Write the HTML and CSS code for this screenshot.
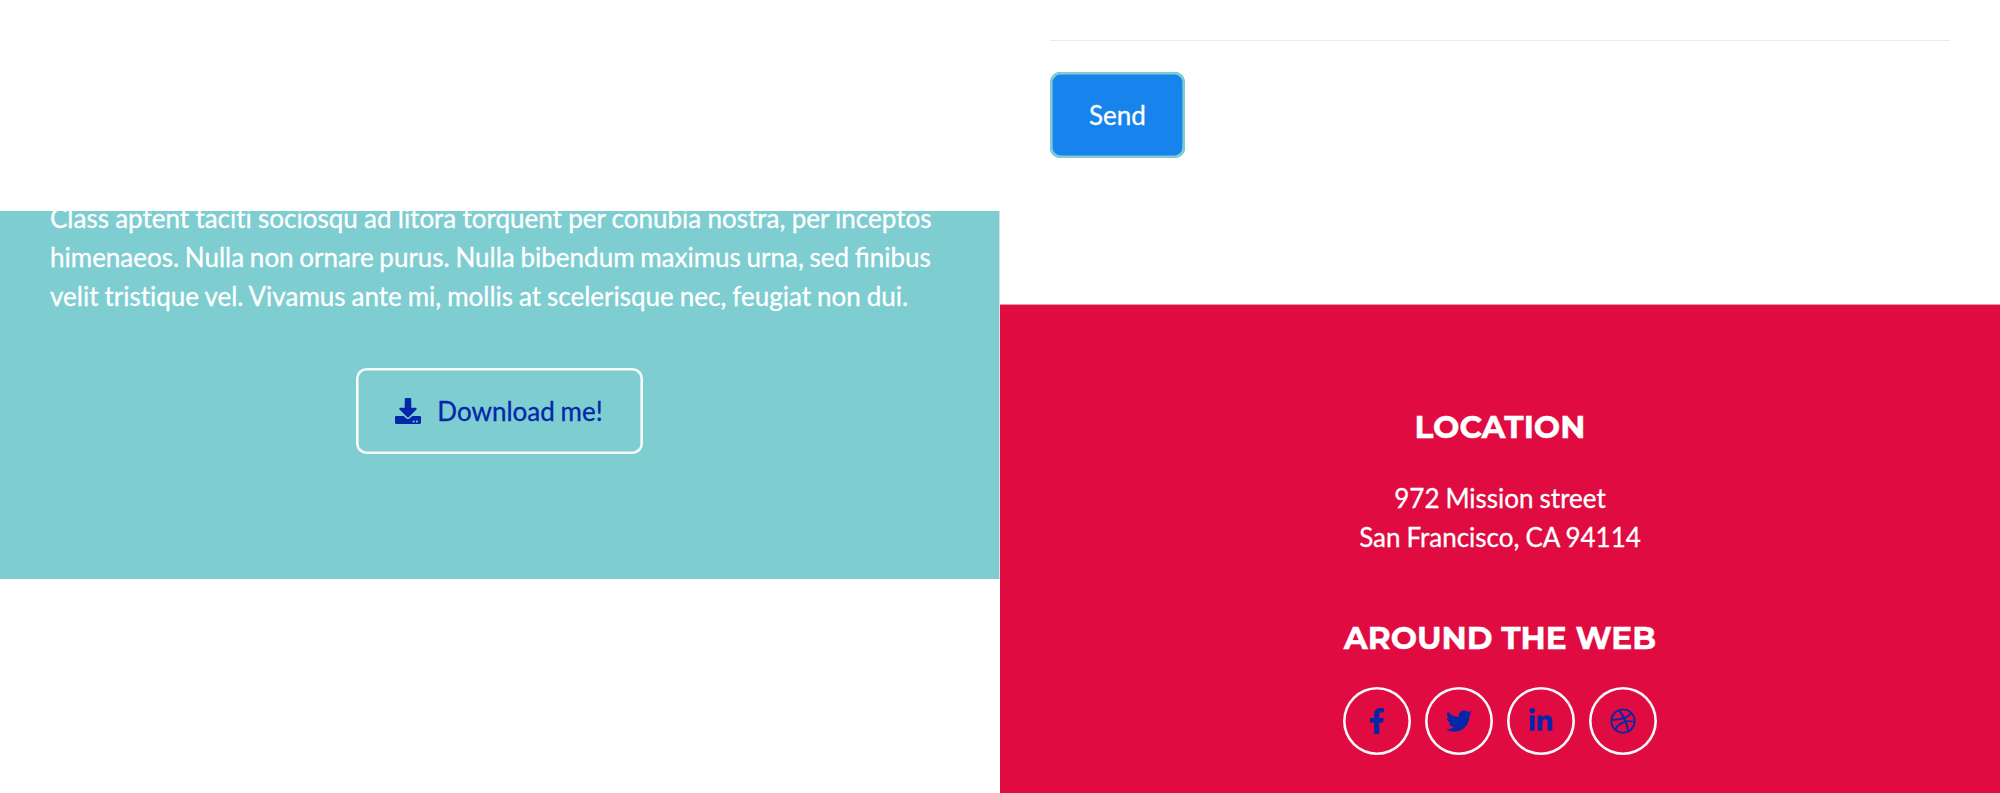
FILE: index.html
```html
<!DOCTYPE html>
<html lang="en">
<head>
<meta charset="utf-8">
<title>Freelancer</title>
<link rel="stylesheet" href="styles.css">
</head>
<body>
<main class="page">
  <div class="column column-left">
    <section class="about">
      <p class="lead"><span class="line-loose">Class aptent <span class="plain">taciti</span> sociosqu ad litora torquent per conubia nostra, per inceptos</span><br><span class="line-tight">himenaeos. Nulla non ornare purus. Nulla bibendum maximus urna, sed finibus</span><br>velit <span class="plain">tristique</span> vel. Vivamus ante mi, mollis at scelerisque nec, feugiat non dui.</p>
      <a class="btn btn-download" href="#">
        <svg class="icon" viewBox="0 0 512 512"><path d="M216 0h80c13.3 0 24 10.7 24 24v168h87.7c17.8 0 26.7 21.5 14.1 34.1L269.7 378.3c-7.5 7.5-19.8 7.5-27.3 0L90.1 226.1c-12.6-12.6-3.7-34.1 14.1-34.1H192V24c0-13.3 10.7-24 24-24zm296 376v112c0 13.3-10.7 24-24 24H24c-13.3 0-24-10.7-24-24V376c0-13.3 10.7-24 24-24h146.7l49 49c20.1 20.1 52.5 20.1 72.6 0l49-49H488c13.3 0 24 10.7 24 24zm-124 88c0-11-9-20-20-20s-20 9-20 20 9 20 20 20 20-9 20-20zm64 0c0-11-9-20-20-20s-20 9-20 20 9 20 20 20 20-9 20-20z"/></svg>
        <span>Download me!</span>
      </a>
    </section>
  </div>
  <div class="column column-right">
    <section class="contact">
      <div class="divider"></div>
      <button class="btn btn-send" type="button">Send</button>
    </section>
    <footer class="footer">
      <h4 class="heading heading-location">Location</h4>
      <p class="address">972 Mission street<br>San Francisco, CA 94114</p>
      <h4 class="heading heading-web">Around the Web</h4>
      <nav class="social">
        <a class="social-link" href="#" aria-label="Facebook"><svg class="icon" viewBox="-96 0 512 512"><path d="M279.14 288l14.22-92.66h-88.91v-60.13c0-25.35 12.42-50.06 52.24-50.06h40.42V6.26S260.43 0 225.36 0c-73.22 0-121.08 44.38-121.08 124.72v70.62H22.89V288h81.39v224h100.17V288z"/></svg></a>
        <a class="social-link" href="#" aria-label="Twitter"><svg class="icon" viewBox="0 0 512 512"><path d="M459.37 151.716c.325 4.548.325 9.097.325 13.645 0 138.72-105.583 298.558-298.558 298.558-59.452 0-114.68-17.219-161.137-47.106 8.447.974 16.568 1.299 25.34 1.299 49.055 0 94.213-16.568 130.274-44.832-46.132-.975-84.792-31.188-98.112-72.772 6.498.974 12.995 1.624 19.818 1.624 9.421 0 18.843-1.3 27.614-3.573-48.081-9.747-84.143-51.98-84.143-102.985v-1.299c13.969 7.797 30.214 12.67 47.431 13.319-28.264-18.843-46.781-51.005-46.781-87.391 0-19.492 5.197-37.36 14.294-52.954 51.655 63.675 129.3 105.258 216.365 109.807-1.624-7.797-2.599-15.918-2.599-24.04 0-57.828 46.782-104.934 104.934-104.934 30.213 0 57.502 12.67 76.67 33.137 23.715-4.548 46.456-13.32 66.599-25.34-7.798 24.366-24.366 44.833-46.132 57.827 21.117-2.273 41.584-8.122 60.426-16.243-14.292 20.791-32.161 39.308-52.628 54.253z"/></svg></a>
        <a class="social-link" href="#" aria-label="LinkedIn"><svg class="icon" viewBox="-32 0 512 512"><path d="M100.28 448H7.4V148.9h92.88zM53.79 108.1C24.09 108.1 0 83.5 0 53.8a53.79 53.79 0 0 1 107.58 0c0 29.7-24.1 54.3-53.79 54.3zM447.9 448h-92.68V302.4c0-34.7-.7-79.2-48.29-79.2-48.29 0-55.69 37.7-55.69 76.7V448h-92.78V148.9h89.08v40.8h1.3c12.4-23.5 42.69-48.3 87.88-48.3 94 0 111.28 61.9 111.28 142.3V448z"/></svg></a>
        <a class="social-link" href="#" aria-label="Dribbble"><svg class="icon" viewBox="0 0 512 512"><path d="M256 8C119.252 8 8 119.252 8 256s111.252 248 248 248 248-111.252 248-248S392.748 8 256 8zm163.97 114.366c29.503 36.046 47.369 81.957 47.835 131.955-6.984-1.477-77.018-15.682-147.502-6.818-5.752-14.041-11.181-26.393-18.617-41.614 78.321-31.977 113.818-77.482 118.284-83.523zM396.421 97.87c-3.81 5.427-35.697 48.286-111.021 76.519-34.712-63.776-73.185-116.168-79.04-124.008 67.176-16.193 137.966 1.27 190.061 47.489zm-230.48-33.25c5.585 7.659 43.438 60.116 78.537 122.509-99.087 26.313-186.36 25.934-195.834 25.809C62.38 147.205 106.678 92.573 165.941 64.62zM44.17 256.323c0-2.166.043-4.322.108-6.473 9.268.19 111.92 1.513 217.706-30.146 6.064 11.868 11.857 23.915 17.174 35.949-76.599 21.575-146.194 83.527-180.531 142.306C64.794 360.405 44.17 310.73 44.17 256.323zm81.807 167.113c22.127-45.233 82.178-103.622 167.579-132.756 29.74 77.283 42.039 142.053 45.189 160.638-68.112 29.013-150.015 21.053-212.768-27.882zm248.38 8.489c-2.171-12.886-13.446-74.897-41.152-151.033 66.38-10.626 124.7 6.768 131.947 9.055-9.442 58.941-43.273 109.844-90.795 141.978z"/></svg></a>
      </nav>
    </footer>
  </div>
</main>
</body>
</html>
```
FILE: styles.css
```css
* { box-sizing: border-box; }

body {
  margin: 0;
  background: #fff;
  font-family: Lato, "Liberation Sans", sans-serif;
  font-size: 26px;
  line-height: 39px;
}

.page {
  display: grid;
  grid-template-columns: 1000px 1000px;
  height: 793px;
  overflow: hidden;
}

.column { height: 793px; }

.column-left { padding-top: 211px; }

.about {
  display: flex;
  flex-direction: column;
  align-items: center;
  width: 999px;
  height: 368px;
  overflow: hidden;
  background: #7ecdd1;
  box-shadow: 1px 0 #cfe6e8;
  color: #fff;
}

.lead {
  align-self: flex-start;
  margin: -12px 0 52px;
  padding-left: 50px;
  white-space: nowrap;
  word-spacing: -0.7px;
  -webkit-text-stroke: 0.3px;
}

.line-loose { word-spacing: -0.42px; }

.line-tight { word-spacing: -0.95px; }

.plain { font-variant-ligatures: none; }

.btn {
  display: flex;
  align-items: center;
  justify-content: center;
  height: 86px;
  border: 0;
  border-radius: 10.5px;
  font: inherit;
  text-decoration: none;
  -webkit-text-stroke: 0.3px;
}

.icon {
  display: block;
  width: 26px;
  height: 26px;
  fill: currentColor;
  stroke: none;
}

.btn-download {
  gap: 16px;
  width: 287px;
  padding-right: 1px;
  box-shadow: inset 0 0 0 2.6px #f8f9fa;
  color: #0327a8;
  word-spacing: -0.85px;
}

.contact {
  height: 304px;
  padding: 40px 50px 0;
}

.divider {
  height: 1px;
  margin-bottom: 31px;
  background: #e4edf1;
}

.btn-send {
  width: 135px;
  background: #1783ec;
  box-shadow: inset 0 0 0 2.6px #7ecdd1;
  color: #fff;
}

.footer {
  display: flex;
  flex-direction: column;
  align-items: center;
  height: 489px;
  padding-top: 103px;
  background: #e00b41;
  border-top: 1px solid #f094ab;
  color: #fff;
  text-align: center;
}

.heading {
  margin: 0;
  font-family: Montserrat, Lato, sans-serif;
  font-size: 31.2px;
  font-weight: 700;
  line-height: 38px;
  text-transform: uppercase;
  white-space: nowrap;
  -webkit-text-stroke: 0.4px;
}

.address {
  margin: 33px 0 62px;
  word-spacing: -0.7px;
  -webkit-text-stroke: 0.3px;
}

.social {
  display: flex;
  gap: 14px;
  margin-top: 30px;
}

.social-link {
  display: flex;
  align-items: center;
  justify-content: center;
  width: 68px;
  height: 68px;
  border-radius: 50%;
  box-shadow: inset 0 0 0 2.6px #f8f9fa;
  color: #0327a8;
}
```
